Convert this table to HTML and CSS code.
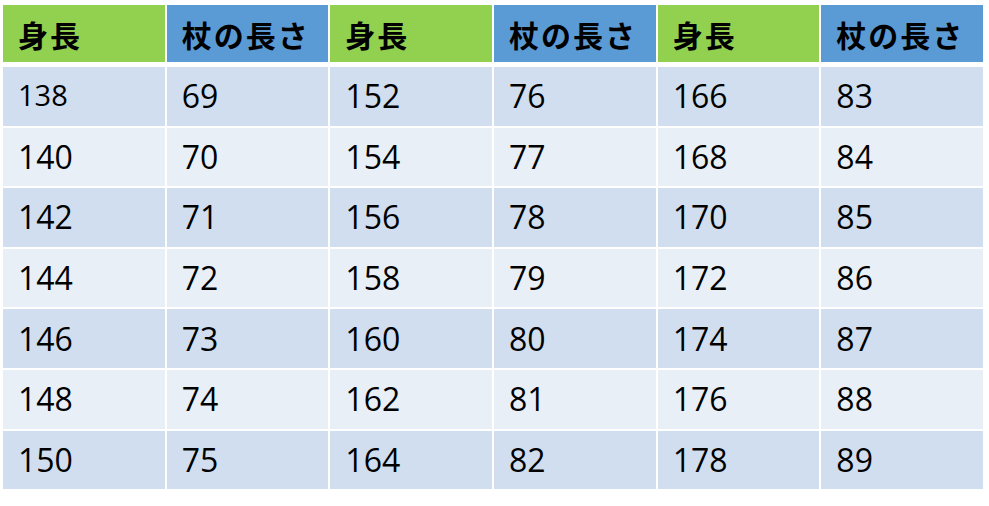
FILE: index.html
```html
<!DOCTYPE html>
<html lang="ja">
<head>
<meta charset="utf-8">
<title>身長と杖の長さ</title>
<link rel="stylesheet" href="styles.css">
</head>
<body>
<div class="table">
  <div class="row head">
    <div class="cell green">身長</div>
    <div class="cell blue">杖の長さ</div>
    <div class="cell green">身長</div>
    <div class="cell blue">杖の長さ</div>
    <div class="cell green">身長</div>
    <div class="cell blue">杖の長さ</div>
  </div>
  <div class="body">
    <div class="row odd">
      <div class="cell small">138</div><div class="cell">69</div>
      <div class="cell">152</div><div class="cell">76</div>
      <div class="cell">166</div><div class="cell">83</div>
    </div>
    <div class="row even">
      <div class="cell">140</div><div class="cell">70</div>
      <div class="cell">154</div><div class="cell">77</div>
      <div class="cell">168</div><div class="cell">84</div>
    </div>
    <div class="row odd">
      <div class="cell">142</div><div class="cell">71</div>
      <div class="cell">156</div><div class="cell">78</div>
      <div class="cell">170</div><div class="cell">85</div>
    </div>
    <div class="row even">
      <div class="cell">144</div><div class="cell">72</div>
      <div class="cell">158</div><div class="cell">79</div>
      <div class="cell">172</div><div class="cell">86</div>
    </div>
    <div class="row odd">
      <div class="cell">146</div><div class="cell">73</div>
      <div class="cell">160</div><div class="cell">80</div>
      <div class="cell">174</div><div class="cell">87</div>
    </div>
    <div class="row even">
      <div class="cell">148</div><div class="cell">74</div>
      <div class="cell">162</div><div class="cell">81</div>
      <div class="cell">176</div><div class="cell">88</div>
    </div>
    <div class="row odd">
      <div class="cell">150</div><div class="cell">75</div>
      <div class="cell">164</div><div class="cell">82</div>
      <div class="cell">178</div><div class="cell">89</div>
    </div>
  </div>
</div>
</body>
</html>
```
FILE: styles.css
```css
html, body {
  margin: 0;
  padding: 0;
  background: #ffffff;
}

body {
  padding: 5px 6px 0 3px;
  font-family: "Open Sans", "Noto Sans CJK JP", sans-serif;
  color: #000000;
}

.table {
  width: 980px;
  display: flex;
  flex-direction: column;
}

.row {
  display: grid;
  grid-template-columns: repeat(6, 1fr);
  column-gap: 2px;
}

.head {
  height: 57px;
  margin-bottom: 5px;
}

.body {
  display: flex;
  flex-direction: column;
  gap: 2px;
}

.body .row {
  height: 58.6px;
}

.cell {
  display: flex;
  align-items: center;
  padding-left: 15px;
  font-size: 32px;
  line-height: 1;
  white-space: nowrap;
}

.head .cell {
  font-family: "Noto Sans CJK JP", sans-serif;
  font-weight: 700;
  font-size: 30px;
  padding-left: 15px;
  letter-spacing: 2px;
}

.green {
  background: #92d050;
}

.blue {
  background: #5b9bd5;
}

.odd .cell {
  background: #d0deef;
}

.even .cell {
  background: #e9eff7;
}

.cell.small {
  font-size: 29px;
  padding-bottom: 4px;
}
```
